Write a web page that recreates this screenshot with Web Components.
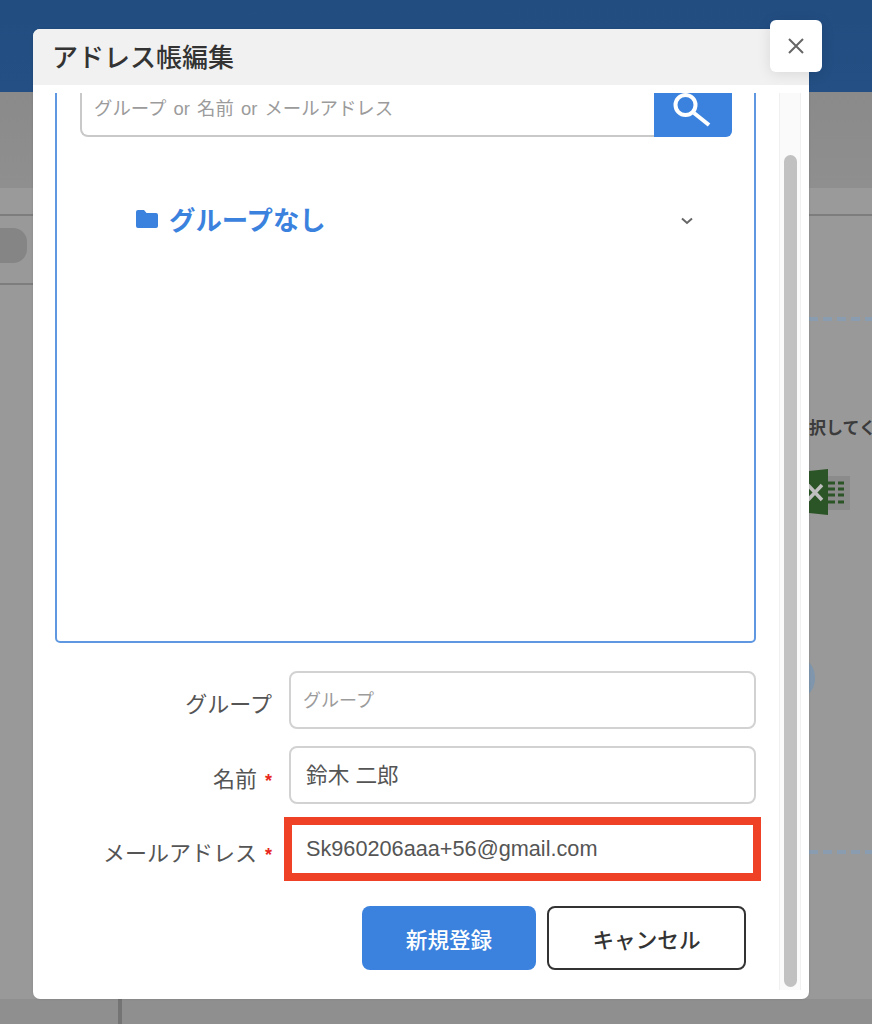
<!DOCTYPE html>
<html lang="ja">
<head>
<meta charset="utf-8">
<title>アドレス帳編集</title>
<style>
  html, body { margin: 0; height: 100%; overflow: hidden; }
  body { font-family: "Liberation Sans", "Noto Sans CJK JP", sans-serif; }
</style>
</head>
<body>
<page-backdrop></page-backdrop>
<address-dialog heading="アドレス帳編集">
  <address-picker placeholder="グループ or 名前 or メールアドレス" group="グループなし"></address-picker>
  <form-row label="グループ" placeholder="グループ"></form-row>
  <form-row label="名前" value="鈴木 二郎" required></form-row>
  <form-row label="メールアドレス" value="Sk960206aaa+56@gmail.com" required marked></form-row>
  <dialog-actions></dialog-actions>
</address-dialog>

<script>
class PageBackdrop extends HTMLElement {
    constructor() {
        super();
        this.attachShadow({ mode: 'open' });
        this.shadowRoot.innerHTML = `
          <style>
            :host { display: block; position: relative; width: 872px; height: 1024px; overflow: hidden; background: #999; font-family: "Noto Sans CJK JP", sans-serif; }
            .top { height: 92px; background: linear-gradient(#224d81, #234f84); }
            .band { height: 96px; background: linear-gradient(#8a8a8a, #8f8f8f); }
            .tabs { height: 26px; background: #9a9a9a; border-bottom: 2px solid #7d7d7d; }
            /* fragments of the page showing around the dialog */
            .pill { position: absolute; left: -20px; top: 228px; width: 47px; height: 35px; border-radius: 14px; background: #858585; }
            .rule { position: absolute; left: 0; top: 283px; width: 40px; height: 2px; background: #7d7d7d; }
            .dash { position: absolute; left: 809px; width: 63px; height: 4px; background: repeating-linear-gradient(90deg, #8a9db0 0 9px, transparent 9px 14px); }
            .hint { position: absolute; left: 809px; top: 415px; font-size: 17px; line-height: 24px; font-weight: 700; color: #3c3c3c; white-space: nowrap; }
            .xl { position: absolute; left: 809px; top: 468px; }
            .dot { position: absolute; left: 790px; top: 660px; width: 25px; height: 36px; border-radius: 50%; background: #7f96ad; }
            .stem { position: absolute; left: 118px; top: 990px; width: 4px; height: 34px; background: #747474; }
            .foot { position: absolute; left: 0; right: 0; top: 999px; height: 25px; background: #8f8f8f; }
          </style>
          <div class="top"></div>
          <div class="band"></div>
          <div class="tabs"></div>
          <div class="pill"></div>
          <div class="rule"></div>
          <div class="dash" style="top:317px"></div>
          <div class="dash" style="top:850px"></div>
          <div class="hint">択してく</div>
          <svg class="xl" width="42" height="48" viewBox="0 0 42 48">
            <rect x="19" y="8" width="22" height="34" fill="#8b8b8b"/>
            <path d="M0 3 19 1V47L0 45Z" fill="#2c5527"/>
            <path d="M-1 17 13 32M13 17-1 32" stroke="#c0c0c0" stroke-width="3.5" fill="none"/>
            <path d="M19 15h7M29 15h6M19 21h7M29 21h6M19 27h7M29 27h6M19 34h7M29 34h6" stroke="#2c5527" stroke-width="3" fill="none"/>
          </svg>
          <div class="dot"></div>
          <div class="foot"></div>
          <div class="stem"></div>
        `;
    }
}

class AddressDialog extends HTMLElement {
    constructor() {
        super();
        this.attachShadow({ mode: 'open' });
        this.shadowRoot.innerHTML = `
          <style>
            :host {
              position: absolute; left: 33px; top: 29px;
              display: flex; flex-direction: column;
              width: 776px; height: 970px;
              background: #fff; border-radius: 7px;
              font-family: "Liberation Sans", "Noto Sans CJK JP", sans-serif;
              box-shadow: 0 0 2px rgba(0,0,0,.15);
            }
            header {
              flex: none; box-sizing: border-box; height: 56px; padding: 0 0 4px 19px;
              display: flex; align-items: center;
              background: #f1f1f1; border-radius: 7px 7px 0 0;
              font-size: 26px; font-weight: 500; color: #333;
            }
            .body { flex: none; display: flex; height: 897px; margin-top: 8px; }
            .content { flex: none; width: 701px; padding: 0 23px 0 22px; overflow: hidden; }
            .track { flex: none; position: relative; width: 20px; border: solid #f0f0f0; border-width: 0 1px; background: #fafafa; }
            .thumb { position: absolute; left: 4px; top: 62px; width: 13px; height: 832px; border-radius: 7px; background: #c1c1c1; }
            button {
              position: absolute; left: 737px; top: -9px;
              display: flex; align-items: center; justify-content: center;
              width: 52px; height: 52px; padding: 0;
              border: 0; border-radius: 6px; background: #fff;
              box-shadow: 0 2px 14px rgba(0,0,0,.1);
            }
          </style>
          <header>${this.getAttribute('heading') || ''}</header>
          <div class="body">
            <div class="content"><slot></slot></div>
            <div class="track"><div class="thumb"></div></div>
          </div>
          <button aria-label="閉じる">
            <svg width="16" height="16" viewBox="0 0 16 16"><path d="M1 1 15 15M15 1 1 15" stroke="#666" stroke-width="2" fill="none"/></svg>
          </button>
        `;
    }
}

class AddressPicker extends HTMLElement {
    constructor() {
        super();
        this.attachShadow({ mode: 'open' });
        this.shadowRoot.innerHTML = `
          <style>
            :host {
              display: block; box-sizing: border-box; height: 583px;
              margin-top: -33px; padding: 17px 22px 0 23px;
              border: 2px solid #5f97e0; border-radius: 5px;
            }
            .search { display: flex; height: 58px; }
            .input {
              flex: 1; display: flex; align-items: center; padding-left: 12px;
              border: solid #c9c9c9; border-width: 0 0 2px 2px; border-radius: 0 0 0 8px;
              font-size: 18.4px; word-spacing: 2px; color: #9b9b9b;
            }
            .go { flex: none; width: 78px; background: #3b82de; border-radius: 0 0 6px 0; }
            .go svg { display: block; }
            .group {
              display: flex; align-items: center;
              margin: 64px 39px 0 56px; height: 40px;
              font-size: 26.4px; font-weight: 700; color: #3b82de;
            }
            .group svg.folder { margin: 0 11px 4px 0; }
            .group span { flex: 1; padding-bottom: 6px; }
          </style>
          <div class="search">
            <div class="input">${this.getAttribute('placeholder') || ''}</div>
            <div class="go">
              <svg width="78" height="58" viewBox="0 0 78 58">
                <circle cx="31.500" cy="26" r="10" stroke="#fff" stroke-width="4" fill="none"/>
                <path d="M40 34 55 46" stroke="#fff" stroke-width="4" fill="none"/>
              </svg>
            </div>
          </div>
          <div class="group">
            <svg class="folder" width="22" height="18" viewBox="0 0 22 18"><path d="M2 0H8L10.500 3H20A2 2 0 0 1 22 5V16A2 2 0 0 1 20 18H2A2 2 0 0 1 0 16V2A2 2 0 0 1 2 0Z" fill="#3b82de"/></svg>
            <span>${this.getAttribute('group') || ''}</span>
            <svg width="12" height="8" viewBox="0 0 12 8"><path d="M1 1.500 6 6 11 1.500" stroke="#666" stroke-width="2" fill="none"/></svg>
          </div>
        `;
    }
}

class FormRow extends HTMLElement {
    constructor() {
        super();
        this.attachShadow({ mode: 'open' });
        const value = this.getAttribute('value');
        const text = value || this.getAttribute('placeholder') || '';
        this.shadowRoot.innerHTML = `
          <style>
            :host { display: grid; grid-template-columns: 217px 467px; column-gap: 17px; align-items: center; height: 58px; margin-bottom: 17px; }
            :host(:not([required])) { margin-top: 28px; }
            :host([marked]) { height: 64px; margin-top: -4px; margin-bottom: 25px; }
            .label { display: flex; justify-content: flex-end; align-items: baseline; font-size: 22px; color: #555; white-space: nowrap; padding-top: 4px; }
            .req { margin-left: 8px; color: #e8281c; font-size: 18px; font-weight: 700; }
            .field {
              box-sizing: border-box; height: 58px; display: flex; align-items: center;
              padding: 0 0 3px 15px; border: 2px solid #d2d2d2; border-radius: 8px;
              font-size: 21.7px; color: #555;
            }
            .field.empty { padding: 0 0 2px 12px; font-size: 18px; color: #9b9b9b; }
            :host([marked]) .field {
              height: 64px; margin: 0 -5px; padding: 0 0 1px 14px; width: 477px;
              border: 8px solid #ee4125; border-radius: 0;
            }
          </style>
          <div class="label">${this.getAttribute('label') || ''}${this.hasAttribute('required') ? '<span class="req">*</span>' : ''}</div>
          <div class="field ${value ? '' : 'empty'}">${text}</div>
        `;
    }
}

class DialogActions extends HTMLElement {
    constructor() {
        super();
        this.attachShadow({ mode: 'open' });
        this.shadowRoot.innerHTML = `
          <style>
            :host { display: flex; gap: 11px; padding-left: 307px; }
            button {
              box-sizing: border-box; height: 64px; padding: 0; border-radius: 8px;
              font: 500 21.6px "Liberation Sans", "Noto Sans CJK JP", sans-serif;
            }
            .save { width: 174px; border: 0; background: #3b82de; color: #fff; }
            .cancel { width: 199px; border: 2px solid #333; background: #fff; color: #333; }
          </style>
          <button class="save">新規登録</button>
          <button class="cancel">キャンセル</button>
        `;
    }
}

customElements.define('page-backdrop', PageBackdrop);
customElements.define('address-dialog', AddressDialog);
customElements.define('address-picker', AddressPicker);
customElements.define('form-row', FormRow);
customElements.define('dialog-actions', DialogActions);
</script>
</body>
</html>
